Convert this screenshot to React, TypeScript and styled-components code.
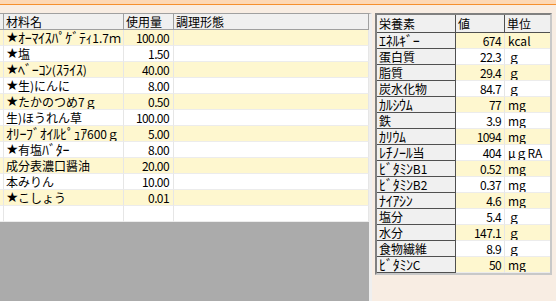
import styled, { createGlobalStyle } from 'styled-components';

const GlobalStyle = createGlobalStyle`
  html, body {
    margin: 0;
    padding: 0;
    background: #f8ede3;
    overflow: hidden;
  }
  body {
    font-family: "Noto Sans CJK JP", "DejaVu Sans", sans-serif;
    font-size: 12px;
    color: #000;
  }
`;

const ingredients = [
  { name: '★ｵｰﾏｲｽﾊﾟｹﾞﾃｨ1.7ｍ', amount: '100.00' },
  { name: '★塩', amount: '1.50' },
  { name: '★ﾍﾞｰｺﾝ(ｽﾗｲｽ)', amount: '40.00' },
  { name: '★生)にんに', amount: '8.00' },
  { name: '★たかのつめ7ｇ', amount: '0.50' },
  { name: '生)ほうれん草', amount: '100.00' },
  { name: 'ｵﾘｰﾌﾞｵｲﾙﾋﾟｭｱ600ｇ', amount: '5.00' },
  { name: '★有塩ﾊﾞﾀｰ', amount: '8.00' },
  { name: '成分表濃口醤油', amount: '20.00' },
  { name: '本みりん', amount: '10.00' },
  { name: '★こしょう', amount: '0.01' },
  { name: '', amount: '' },
];

const nutrients = [
  { name: 'ｴﾈﾙｷﾞｰ', value: '674', unit: 'kcal' },
  { name: '蛋白質', value: '22.3', unit: 'ｇ' },
  { name: '脂質', value: '29.4', unit: 'ｇ' },
  { name: '炭水化物', value: '84.7', unit: 'ｇ' },
  { name: 'ｶﾙｼｳﾑ', value: '77', unit: 'mg' },
  { name: '鉄', value: '3.9', unit: 'mg' },
  { name: 'ｶﾘｳﾑ', value: '1094', unit: 'mg' },
  { name: 'ﾚﾁﾉｰﾙ当', value: '404', unit: 'μｇRA' },
  { name: 'ﾋﾞﾀﾐﾝB1', value: '0.52', unit: 'mg' },
  { name: 'ﾋﾞﾀﾐﾝB2', value: '0.37', unit: 'mg' },
  { name: 'ﾅｲｱｼﾝ', value: '4.6', unit: 'mg' },
  { name: '塩分', value: '5.4', unit: 'ｇ' },
  { name: '水分', value: '147.1', unit: 'ｇ' },
  { name: '食物繊維', value: '8.9', unit: 'ｇ' },
  { name: 'ﾋﾞﾀﾐﾝC', value: '50', unit: 'mg' },
];

// half-width kana: larger so they read like the old gothic font
const Kana = styled.span`
  font-size: 14px;
  line-height: 1;
  letter-spacing: -0.3px;
`;

const Star = styled.span`
  display: inline-block;
  width: 12px;
  font-family: "DejaVu Sans", sans-serif;
  font-size: 14px;
  line-height: 15px;
  vertical-align: top;
`;

function GothicText({ text }: { text: string }) {
  const parts = text.split(/([\uFF61-\uFF9F]+|★)/).filter(Boolean);
  return (
    <>
      {parts.map((part, i) => {
        if (part === '★') return <Star key={i}>★</Star>;
        if (/^[\uFF61-\uFF9F]+$/.test(part)) return <Kana key={i}>{part}</Kana>;
        return <span key={i}>{part}</span>;
      })}
    </>
  );
}

const Page = styled.div`
  width: 556px;
  height: 301px;
  display: flex;
  flex-direction: column;
`;

const TopBar = styled.div`
  height: 4px;
  background: #fdd8b5;
  border-bottom: 1px solid #f5902f;
`;

const Body = styled.div`
  flex: 1;
  display: flex;
  padding-top: 8px;
  min-height: 0;
`;

const LeftPanel = styled.div`
  width: 369px;
  background: #ababab;
  border-right: 3px solid #efefef;
  border-top: 1px solid #a0a0a0;
`;

const RecipeGrid = styled.div`
  display: grid;
  grid-template-columns: 4px 120px 50px 1fr;
`;

const HeadCell = styled.div`
  height: 16px;
  box-sizing: border-box;
  background: #f0f0f0;
  border-right: 1px solid #a0a0a0;
  border-bottom: 1px solid #a0a0a0;
  padding-left: 2px;
  line-height: 15px;
  white-space: nowrap;
  overflow: hidden;
  &:last-child {
    border-right: none;
  }
`;

const Cell = styled.div<{ $alt: boolean; $num?: boolean }>`
  height: 16px;
  box-sizing: border-box;
  background: ${(p) => (p.$alt ? '#fef7cf' : '#ffffff')};
  border-right: 1px solid #e6e6e6;
  border-bottom: 1px solid #ececec;
  padding: 0 ${(p) => (p.$num ? '4px' : '0')} 0 2px;
  text-align: ${(p) => (p.$num ? 'right' : 'left')};
  line-height: 15px;
  white-space: nowrap;
  overflow: hidden;
  letter-spacing: ${(p) => (p.$num ? '-0.6px' : '0')};
`;

const RightPanel = styled.div`
  flex: 1;
  padding-left: 3px;
`;

const NutritionGrid = styled.div`
  width: 177px;
  box-sizing: border-box;
  border: 2px solid #808080;
  border-right-color: #c8c8c8;
  border-bottom-color: #c8c8c8;
  display: grid;
  grid-template-columns: 79px 49px 1fr;
`;

const NHead = styled.div`
  height: 18px;
  box-sizing: border-box;
  background: #f0f0f0;
  border-right: 1px solid #505050;
  border-bottom: 1px solid #505050;
  padding-left: 2px;
  line-height: 17px;
  &:nth-child(3) {
    border-right: none;
  }
`;

const NName = styled.div`
  height: 16px;
  box-sizing: border-box;
  background: #f0f0f0;
  border-right: 1px solid #505050;
  border-bottom: 1px solid #505050;
  padding-left: 2px;
  line-height: 15px;
  white-space: nowrap;
  overflow: hidden;
`;

const NValue = styled.div<{ $alt: boolean; $unit?: boolean }>`
  height: 16px;
  box-sizing: border-box;
  background: ${(p) => (p.$alt ? '#fef7cf' : '#ffffff')};
  border-right: ${(p) => (p.$unit ? 'none' : '1px solid #e6e6e6')};
  border-bottom: 1px solid #ececec;
  padding: 0 3px;
  text-align: ${(p) => (p.$unit ? 'left' : 'right')};
  line-height: 15px;
  white-space: nowrap;
  overflow: hidden;
  letter-spacing: ${(p) => (p.$unit ? '0' : '-0.6px')};
`;

export default function App() {
  return (
    <Page>
      <GlobalStyle />
      <TopBar />
      <Body>
        <LeftPanel>
          <RecipeGrid>
            <HeadCell />
            <HeadCell>材料名</HeadCell>
            <HeadCell>使用量</HeadCell>
            <HeadCell>調理形態</HeadCell>
            {ingredients.flatMap((item, i) => {
              const alt = i % 2 === 0 && item.name !== '';
              return [
                <Cell key={`s-${i}`} $alt={alt} />,
                <Cell key={`n-${i}`} $alt={alt}>
                  <GothicText text={item.name} />
                </Cell>,
                <Cell key={`a-${i}`} $alt={alt} $num>{item.amount}</Cell>,
                <Cell key={`f-${i}`} $alt={alt} />,
              ];
            })}
          </RecipeGrid>
        </LeftPanel>
        <RightPanel>
          <NutritionGrid>
            <NHead>栄養素</NHead>
            <NHead>値</NHead>
            <NHead>単位</NHead>
            {nutrients.flatMap((n, i) => {
              const alt = i % 2 === 0;
              return [
                <NName key={`n-${i}`}>
                  <GothicText text={n.name} />
                </NName>,
                <NValue key={`v-${i}`} $alt={alt}>{n.value}</NValue>,
                <NValue key={`u-${i}`} $alt={alt} $unit>{n.unit}</NValue>,
              ];
            })}
          </NutritionGrid>
        </RightPanel>
      </Body>
    </Page>
  );
}
